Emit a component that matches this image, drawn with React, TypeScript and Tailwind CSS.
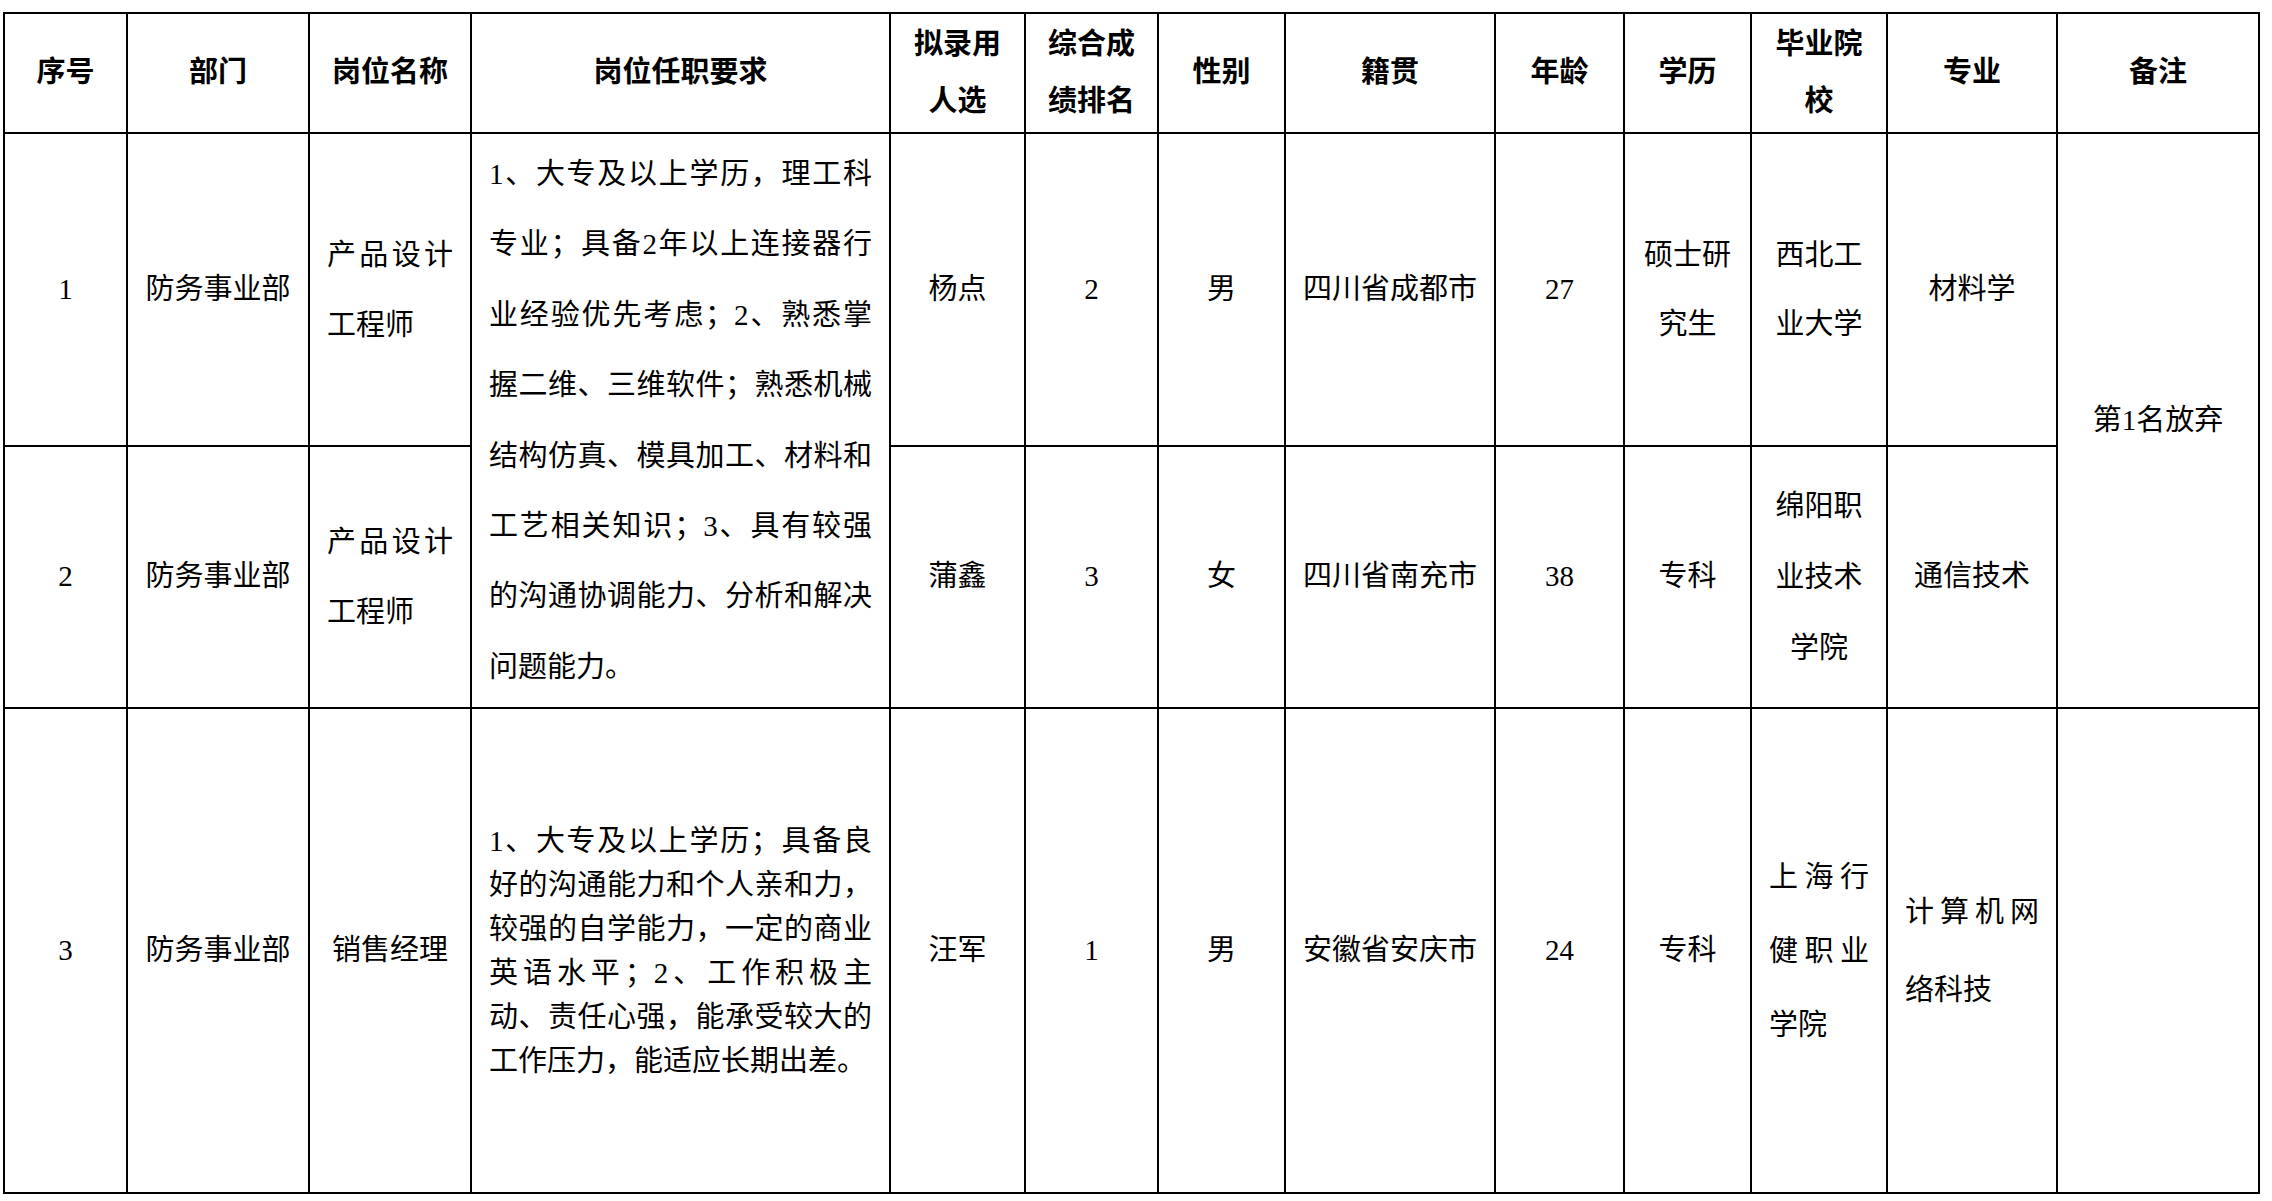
import React from 'react';

interface LinesProps {
  lines: string[];
  justify?: boolean;
  leading: string;
}

// one cell paragraph with the line breaks of the original document
const Lines: React.FC<LinesProps> = ({ lines, justify, leading }) => (
  <div className={leading}>
    {lines.map((line, i) => {
      const last = i === lines.length - 1;
      const align = justify ? (last ? 'text-left' : 'text-justify [text-align-last:justify]') : 'text-center';
      return (
        <div key={i} className={`whitespace-nowrap ${align}`}>
          {line}
        </div>
      );
    })}
  </div>
);

const cell = 'border-2 border-black px-[17px] py-0 text-center align-middle';

const desc1 = [
  '1、大专及以上学历，理工科',
  '专业；具备2年以上连接器行',
  '业经验优先考虑；2、熟悉掌',
  '握二维、三维软件；熟悉机械',
  '结构仿真、模具加工、材料和',
  '工艺相关知识；3、具有较强',
  '的沟通协调能力、分析和解决',
  '问题能力。',
];

const desc3 = [
  '1、大专及以上学历；具备良',
  '好的沟通能力和个人亲和力，',
  '较强的自学能力，一定的商业',
  '英语水平；2、工作积极主',
  '动、责任心强，能承受较大的',
  '工作压力，能适应长期出差。',
];

const App: React.FC = () => {
  return (
    <div className="min-h-screen bg-white pt-[12px] pl-[3px] text-black font-['Liberation_Serif','Noto_Sans_CJK_SC',serif] text-[29px]">
      <table className="table-fixed border-collapse w-[2257px]">
        <colgroup>
          <col className="w-[123px]" />
          <col className="w-[182px]" />
          <col className="w-[162px]" />
          <col className="w-[419px]" />
          <col className="w-[135px]" />
          <col className="w-[133px]" />
          <col className="w-[127px]" />
          <col className="w-[210px]" />
          <col className="w-[129px]" />
          <col className="w-[127px]" />
          <col className="w-[136px]" />
          <col className="w-[170px]" />
          <col className="w-[202px]" />
        </colgroup>
        <thead>
          <tr className="h-[120px] font-bold">
            <th className={cell}>序号</th>
            <th className={cell}>部门</th>
            <th className={cell}>岗位名称</th>
            <th className={cell}>岗位任职要求</th>
            <th className={cell}>
              <Lines lines={['拟录用', '人选']} leading="leading-[57px]" />
            </th>
            <th className={cell}>
              <Lines lines={['综合成', '绩排名']} leading="leading-[57px]" />
            </th>
            <th className={cell}>性别</th>
            <th className={cell}>籍贯</th>
            <th className={cell}>年龄</th>
            <th className={cell}>学历</th>
            <th className={cell}>
              <Lines lines={['毕业院', '校']} leading="leading-[57px]" />
            </th>
            <th className={cell}>专业</th>
            <th className={cell}>备注</th>
          </tr>
        </thead>
        <tbody className="font-normal">
          <tr className="h-[313px]">
            <td className={cell}>1</td>
            <td className={cell}>防务事业部</td>
            <td className={cell}>
              <Lines lines={['产品设计', '工程师']} justify leading="leading-[70px]" />
            </td>
            <td className={cell} rowSpan={2}>
              <Lines lines={desc1} justify leading="leading-[70.4px]" />
            </td>
            <td className={cell}>杨点</td>
            <td className={cell}>2</td>
            <td className={cell}>男</td>
            <td className={cell}>四川省成都市</td>
            <td className={cell}>27</td>
            <td className={cell}>
              <Lines lines={['硕士研', '究生']} leading="leading-[69px]" />
            </td>
            <td className={cell}>
              <Lines lines={['西北工', '业大学']} leading="leading-[69px]" />
            </td>
            <td className={cell}>材料学</td>
            <td className={cell} rowSpan={2}>第1名放弃</td>
          </tr>
          <tr className="h-[262px]">
            <td className={cell}>2</td>
            <td className={cell}>防务事业部</td>
            <td className={cell}>
              <Lines lines={['产品设计', '工程师']} justify leading="leading-[70px]" />
            </td>
            <td className={cell}>蒲鑫</td>
            <td className={cell}>3</td>
            <td className={cell}>女</td>
            <td className={cell}>四川省南充市</td>
            <td className={cell}>38</td>
            <td className={cell}>专科</td>
            <td className={cell}>
              <Lines lines={['绵阳职', '业技术', '学院']} leading="leading-[71px]" />
            </td>
            <td className={cell}>通信技术</td>
          </tr>
          <tr className="h-[485px]">
            <td className={cell}>3</td>
            <td className={cell}>防务事业部</td>
            <td className={cell}>销售经理</td>
            <td className={cell}>
              <Lines lines={desc3} justify leading="leading-[44px]" />
            </td>
            <td className={cell}>汪军</td>
            <td className={cell}>1</td>
            <td className={cell}>男</td>
            <td className={cell}>安徽省安庆市</td>
            <td className={cell}>24</td>
            <td className={cell}>专科</td>
            <td className={cell}>
              <Lines lines={['上海行', '健职业', '学院']} justify leading="leading-[74px]" />
            </td>
            <td className={cell}>
              <Lines lines={['计算机网', '络科技']} justify leading="leading-[78px]" />
            </td>
            <td className={cell}></td>
          </tr>
        </tbody>
      </table>
    </div>
  );
};

export default App;
